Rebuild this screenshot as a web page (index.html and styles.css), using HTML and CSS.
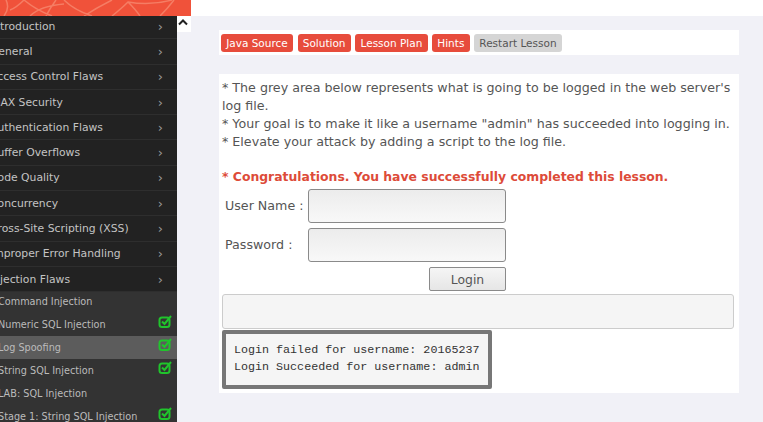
FILE: index.html
```html
<!DOCTYPE html>
<html lang="en">
<head>
    <meta charset="UTF-8">
    <title>Log Spoofing</title>
    <link rel="stylesheet" href="styles.css">
</head>
<body>
    <header class="topbar">
        <div class="brand">
            <svg class="web" width="191" height="16" viewBox="0 0 191 16" fill="none" stroke="#f57d64" stroke-width="1.5">
                <path d="M4 16 Q10 8 6 0 M24 0 Q16 8 10 10 M24 0 Q36 10 52 16 M30 16 Q40 6 64 4 M56 0 Q50 8 46 16 M64 0 Q74 10 92 16 M84 16 Q96 8 112 0 M112 16 Q122 8 128 2 Q150 6 172 0 M128 2 Q136 10 140 16 M160 16 Q168 8 174 0"/>
            </svg>
        </div>
    </header>
    <div class="page">
        <nav class="sidebar">
            <ul class="menu">
                <li class="menu-item"><span class="menu-label">Introduction</span><span class="arrow">&rsaquo;</span></li>
                <li class="menu-item"><span class="menu-label">General</span><span class="arrow">&rsaquo;</span></li>
                <li class="menu-item"><span class="menu-label">Access Control Flaws</span><span class="arrow">&rsaquo;</span></li>
                <li class="menu-item"><span class="menu-label">AJAX Security</span><span class="arrow">&rsaquo;</span></li>
                <li class="menu-item"><span class="menu-label">Authentication Flaws</span><span class="arrow">&rsaquo;</span></li>
                <li class="menu-item"><span class="menu-label">Buffer Overflows</span><span class="arrow">&rsaquo;</span></li>
                <li class="menu-item"><span class="menu-label">Code Quality</span><span class="arrow">&rsaquo;</span></li>
                <li class="menu-item"><span class="menu-label">Concurrency</span><span class="arrow">&rsaquo;</span></li>
                <li class="menu-item"><span class="menu-label">Cross-Site Scripting (XSS)</span><span class="arrow">&rsaquo;</span></li>
                <li class="menu-item"><span class="menu-label">Improper Error Handling</span><span class="arrow">&rsaquo;</span></li>
                <li class="menu-item"><span class="menu-label">Injection Flaws</span><span class="arrow">&rsaquo;</span></li>
            </ul>
            <ul class="submenu">
                <li class="sub-item">Command Injection</li>
                <li class="sub-item">Numeric SQL Injection
                    <svg class="check" viewBox="0 0 14 14"><rect x="1.5" y="2.5" width="10" height="9.5" rx="2.5" fill="none" stroke="#20c42c" stroke-width="2"/><path d="M4 6.5l2.5 2.5 6.5-8" fill="none" stroke="#20c42c" stroke-width="2"/></svg>
                </li>
                <li class="sub-item active">Log Spoofing
                    <svg class="check" viewBox="0 0 14 14"><rect x="1.5" y="2.5" width="10" height="9.5" rx="2.5" fill="none" stroke="#20c42c" stroke-width="2"/><path d="M4 6.5l2.5 2.5 6.5-8" fill="none" stroke="#20c42c" stroke-width="2"/></svg>
                </li>
                <li class="sub-item">String SQL Injection
                    <svg class="check" viewBox="0 0 14 14"><rect x="1.5" y="2.5" width="10" height="9.5" rx="2.5" fill="none" stroke="#20c42c" stroke-width="2"/><path d="M4 6.5l2.5 2.5 6.5-8" fill="none" stroke="#20c42c" stroke-width="2"/></svg>
                </li>
                <li class="sub-item">LAB: SQL Injection</li>
                <li class="sub-item">Stage 1: String SQL Injection
                    <svg class="check" viewBox="0 0 14 14"><rect x="1.5" y="2.5" width="10" height="9.5" rx="2.5" fill="none" stroke="#20c42c" stroke-width="2"/><path d="M4 6.5l2.5 2.5 6.5-8" fill="none" stroke="#20c42c" stroke-width="2"/></svg>
                </li>
            </ul>
        </nav>
        <div class="toggle">
            <svg width="14" height="14" viewBox="0 0 14 14"><path d="M2 8.5L6 4.5l4 4" fill="none" stroke="#222" stroke-width="2"/></svg>
        </div>
        <main class="content">
            <div class="lesson-bar">
                <button class="btn">Java Source</button>
                <button class="btn">Solution</button>
                <button class="btn">Lesson Plan</button>
                <button class="btn">Hints</button>
                <button class="btn btn-grey">Restart Lesson</button>
            </div>
            <section class="lesson">
                <p>* The grey area below represents what is going to be logged in the web server's log file.<br>
                * Your goal is to make it like a username "admin" has succeeded into logging in.<br>
                * Elevate your attack by adding a script to the log file.</p>
                <p class="success">* Congratulations. You have successfully completed this lesson.</p>
                <div class="form-row">
                    <label class="form-label">User Name :</label>
                    <input class="form-input" type="text">
                </div>
                <div class="form-row">
                    <label class="form-label">Password :</label>
                    <input class="form-input" type="password">
                </div>
                <div class="login-row"><button class="login-btn">Login</button></div>
                <div class="grey-area"></div>
                <pre class="log">Login failed for username: 20165237
Login Succeeded for username: admin</pre>
            </section>
        </main>
    </div>
</body>
</html>
```
FILE: styles.css
```css
/* Reset and global styles */
* {
    margin: 0;
    padding: 0;
    box-sizing: border-box;
}

html, body {
    height: 422px;
    overflow: hidden;
}

body {
    font-family: "DejaVu Sans", sans-serif;
    background-color: #f1f1f7;
    color: #555;
}

/* Top bar */
.topbar {
    height: 16px;
    background-color: #fff;
}

.brand {
    width: 191px;
    height: 16px;
    background-color: #f0523a;
}

.web {
    display: block;
}

.page {
    display: flex;
    height: 406px;
}

/* Sidebar */
.sidebar {
    width: 177px;
    flex-shrink: 0;
    overflow: hidden;
    background-color: #333;
}

.menu, .submenu {
    list-style-type: none;
}

.menu {
    margin-top: -2px;
}

.submenu {
    margin-top: -2.5px;
}

.menu-item {
    display: flex;
    justify-content: space-between;
    align-items: center;
    height: 25.3px;
    padding-right: 14px;
    background-color: #222;
    border-bottom: 1px solid #2e2e2e;
    color: #c4c4c4;
    font-size: 10.8px;
}

.menu-label {
    margin-left: -10px;
    white-space: nowrap;
}

.arrow {
    font-size: 13px;
    color: #999;
}

.sub-item {
    position: relative;
    height: 23px;
    line-height: 23px;
    font-size: 9.7px;
    color: #bbb;
    white-space: nowrap;
    margin-left: -2px;
}

.sub-item.active {
    background-color: #5c5c5c;
}

.check {
    position: absolute;
    top: 2px;
    right: 5px;
    width: 14px;
    height: 14px;
}

/* Collapse toggle */
.toggle {
    width: 14px;
    height: 16px;
    flex-shrink: 0;
    background-color: #fff;
}

.toggle svg {
    display: block;
}

/* Main content */
.content {
    width: 572px;
    padding: 14px 0 0 28px;
}

.lesson-bar {
    display: flex;
    gap: 4.6px;
    align-items: center;
    height: 25px;
    padding-left: 2px;
    background-color: #fff;
    width: 520px;
}

.btn {
    height: 18px;
    padding: 0 5.2px;
    border: none;
    border-radius: 3px;
    background-color: #e74c3c;
    color: #fff;
    font-family: "DejaVu Sans", sans-serif;
    font-size: 10.5px;
}

.btn-grey {
    background-color: #d5d5d5;
    color: #555;
}

.lesson {
    width: 520px;
    height: 319px;
    margin-top: 19px;
    padding: 5px 3px;
    background-color: #fff;
    font-size: 12.67px;
    line-height: 18px;
}

.success {
    margin-top: 17px;
    color: #dd4b39;
    font-size: 12.4px;
    font-weight: bold;
}

.form-row {
    display: flex;
    align-items: center;
    height: 39px;
    padding-left: 3px;
}

.form-label {
    width: 83px;
}

.form-input {
    width: 198px;
    height: 34px;
    border: 1px solid #8a8a8a;
    border-radius: 3px;
    background: linear-gradient(#ececec, #f8f8f8);
}

.login-row {
    display: flex;
    justify-content: flex-end;
    width: 284px;
    margin-top: 3px;
}

.login-btn {
    width: 77px;
    height: 24px;
    border: 1px solid #8a8a8a;
    border-radius: 2px;
    background: linear-gradient(#f5f5f5, #e6e6e6);
    color: #555;
    font-family: "DejaVu Sans", sans-serif;
    font-size: 12.4px;
}

.grey-area {
    width: 512px;
    height: 35px;
    margin-top: 3px;
    background-color: #f5f5f5;
    border: 1px solid #ccc;
    border-radius: 3px;
}

.log {
    width: 270px;
    height: 59px;
    margin-top: 1px;
    padding: 8px;
    border: 4px solid #777;
    border-radius: 2px;
    background-color: #f5f5f5;
    color: #333;
    font-family: "Liberation Mono", monospace;
    font-size: 11.7px;
    line-height: 17px;
}
```
